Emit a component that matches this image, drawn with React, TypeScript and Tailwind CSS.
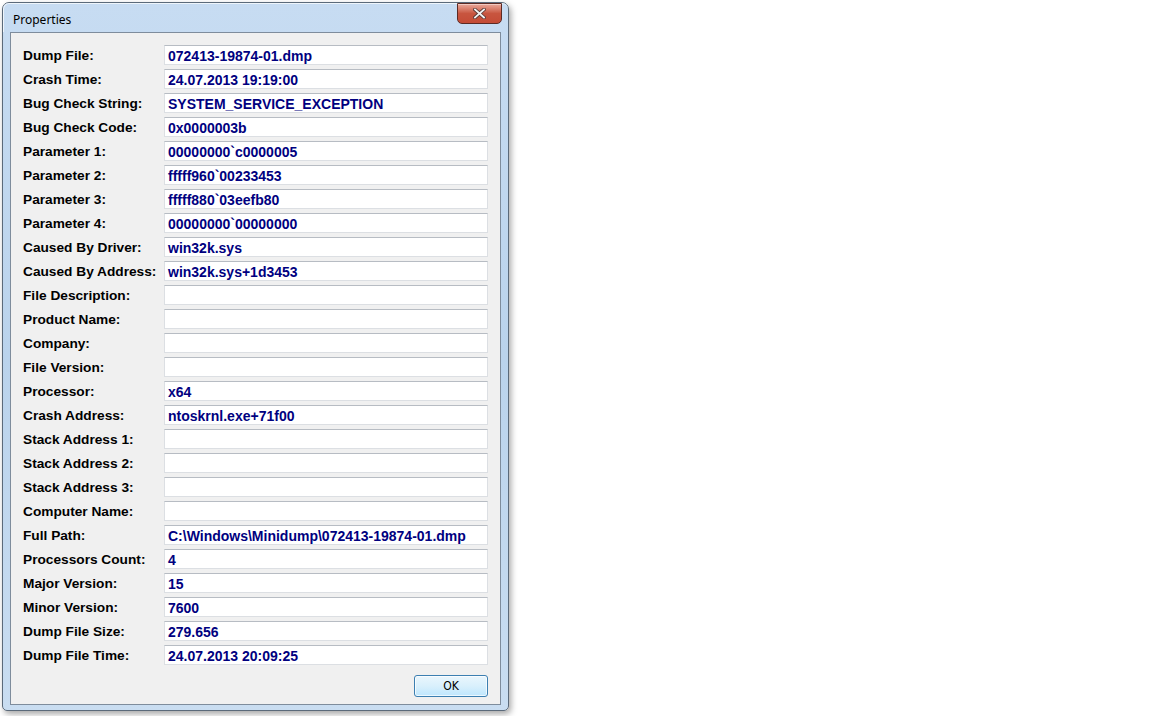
import React from "react";

const rows: [string, string][] = [
  ["Dump File:", "072413-19874-01.dmp"],
  ["Crash Time:", "24.07.2013 19:19:00"],
  ["Bug Check String:", "SYSTEM_SERVICE_EXCEPTION"],
  ["Bug Check Code:", "0x0000003b"],
  ["Parameter 1:", "00000000`c0000005"],
  ["Parameter 2:", "fffff960`00233453"],
  ["Parameter 3:", "fffff880`03eefb80"],
  ["Parameter 4:", "00000000`00000000"],
  ["Caused By Driver:", "win32k.sys"],
  ["Caused By Address:", "win32k.sys+1d3453"],
  ["File Description:", ""],
  ["Product Name:", ""],
  ["Company:", ""],
  ["File Version:", ""],
  ["Processor:", "x64"],
  ["Crash Address:", "ntoskrnl.exe+71f00"],
  ["Stack Address 1:", ""],
  ["Stack Address 2:", ""],
  ["Stack Address 3:", ""],
  ["Computer Name:", ""],
  ["Full Path:", "C:\\Windows\\Minidump\\072413-19874-01.dmp"],
  ["Processors Count:", "4"],
  ["Major Version:", "15"],
  ["Minor Version:", "7600"],
  ["Dump File Size:", "279.656"],
  ["Dump File Time:", "24.07.2013 20:09:25"],
];

export default function App() {
  return (
    <div className="relative w-[1152px] h-[716px] bg-white overflow-hidden">
      {/* window */}
      <div className="absolute left-[2px] top-[2px] w-[507px] h-[709px] flex flex-col rounded-t-[7px] rounded-b-[5px] border border-[#5b6a7a] bg-gradient-to-b from-[#c7dcf2] via-[#bad3ec] to-[#c9ddf1] shadow-[2px_3px_6px_rgba(0,0,0,0.35)]">
        <div className="relative h-[29px] shrink-0 flex items-center pl-[9px] pt-[3px] rounded-t-[6px] border-t border-l border-white/70">
          <span className="text-[12px] text-black" style={{ fontFamily: '"Noto Sans", "Open Sans", sans-serif' }}>
            Properties
          </span>
          <div className="absolute right-[6px] top-[-1px] w-[45px] h-[21px] rounded-b-[5px] border border-[#5c2a24] bg-gradient-to-b from-[#e9a99c] via-[#c8553f] to-[#c44b36] flex items-center justify-center shadow-[inset_0_1px_0_rgba(255,255,255,0.4)]">
            <svg width="13" height="11" viewBox="0 0 13 11">
              <path d="M2 1.5 L11 9.5 M11 1.5 L2 9.5" stroke="#5a3a36" strokeWidth="3.6" strokeLinecap="square" />
              <path d="M2 1.5 L11 9.5 M11 1.5 L2 9.5" stroke="#f4f4f4" strokeWidth="1.8" strokeLinecap="square" />
            </svg>
          </div>
        </div>
        <div className="flex-1 mx-[7px] mb-[5px] border border-[#7e8c9c] bg-[#f0f0f0] flex flex-col pt-[12px] pl-[12px] pr-[12px]">
          <div className="flex flex-col gap-[4px]">
            {rows.map(([label, value]) => (
              <div key={label} className="flex items-center h-[20px]">
                <div
                  className="w-[141px] text-[13.7px] font-bold text-black leading-none pt-[1px]"
                  style={{ fontFamily: '"Liberation Sans", Arial, sans-serif' }}
                >
                  {label}
                </div>
                <div className="w-[324px] h-[20px] bg-white border border-[#dcdfe3] border-t-[#b7bcc3] flex items-center pl-[3px] pt-[1px]">
                  <span
                    className="text-[14px] font-bold text-[#00007f] leading-none whitespace-nowrap"
                    style={{ fontFamily: '"Liberation Sans", Arial, sans-serif' }}
                  >
                    {value}
                  </span>
                </div>
              </div>
            ))}
          </div>
          <div className="flex justify-end mt-[10px]">
            <div className="w-[74px] h-[22px] rounded-[3px] border border-[#3c7fb1] bg-gradient-to-b from-[#eaf6fd] via-[#d9f0fc] to-[#bee6fd] flex items-center justify-center shadow-[inset_0_0_0_1px_rgba(255,255,255,0.7)]">
              <span className="text-[12px] text-black" style={{ fontFamily: '"DejaVu Sans Condensed", "DejaVu Sans", sans-serif' }}>
                OK
              </span>
            </div>
          </div>
        </div>
      </div>
    </div>
  );
}
